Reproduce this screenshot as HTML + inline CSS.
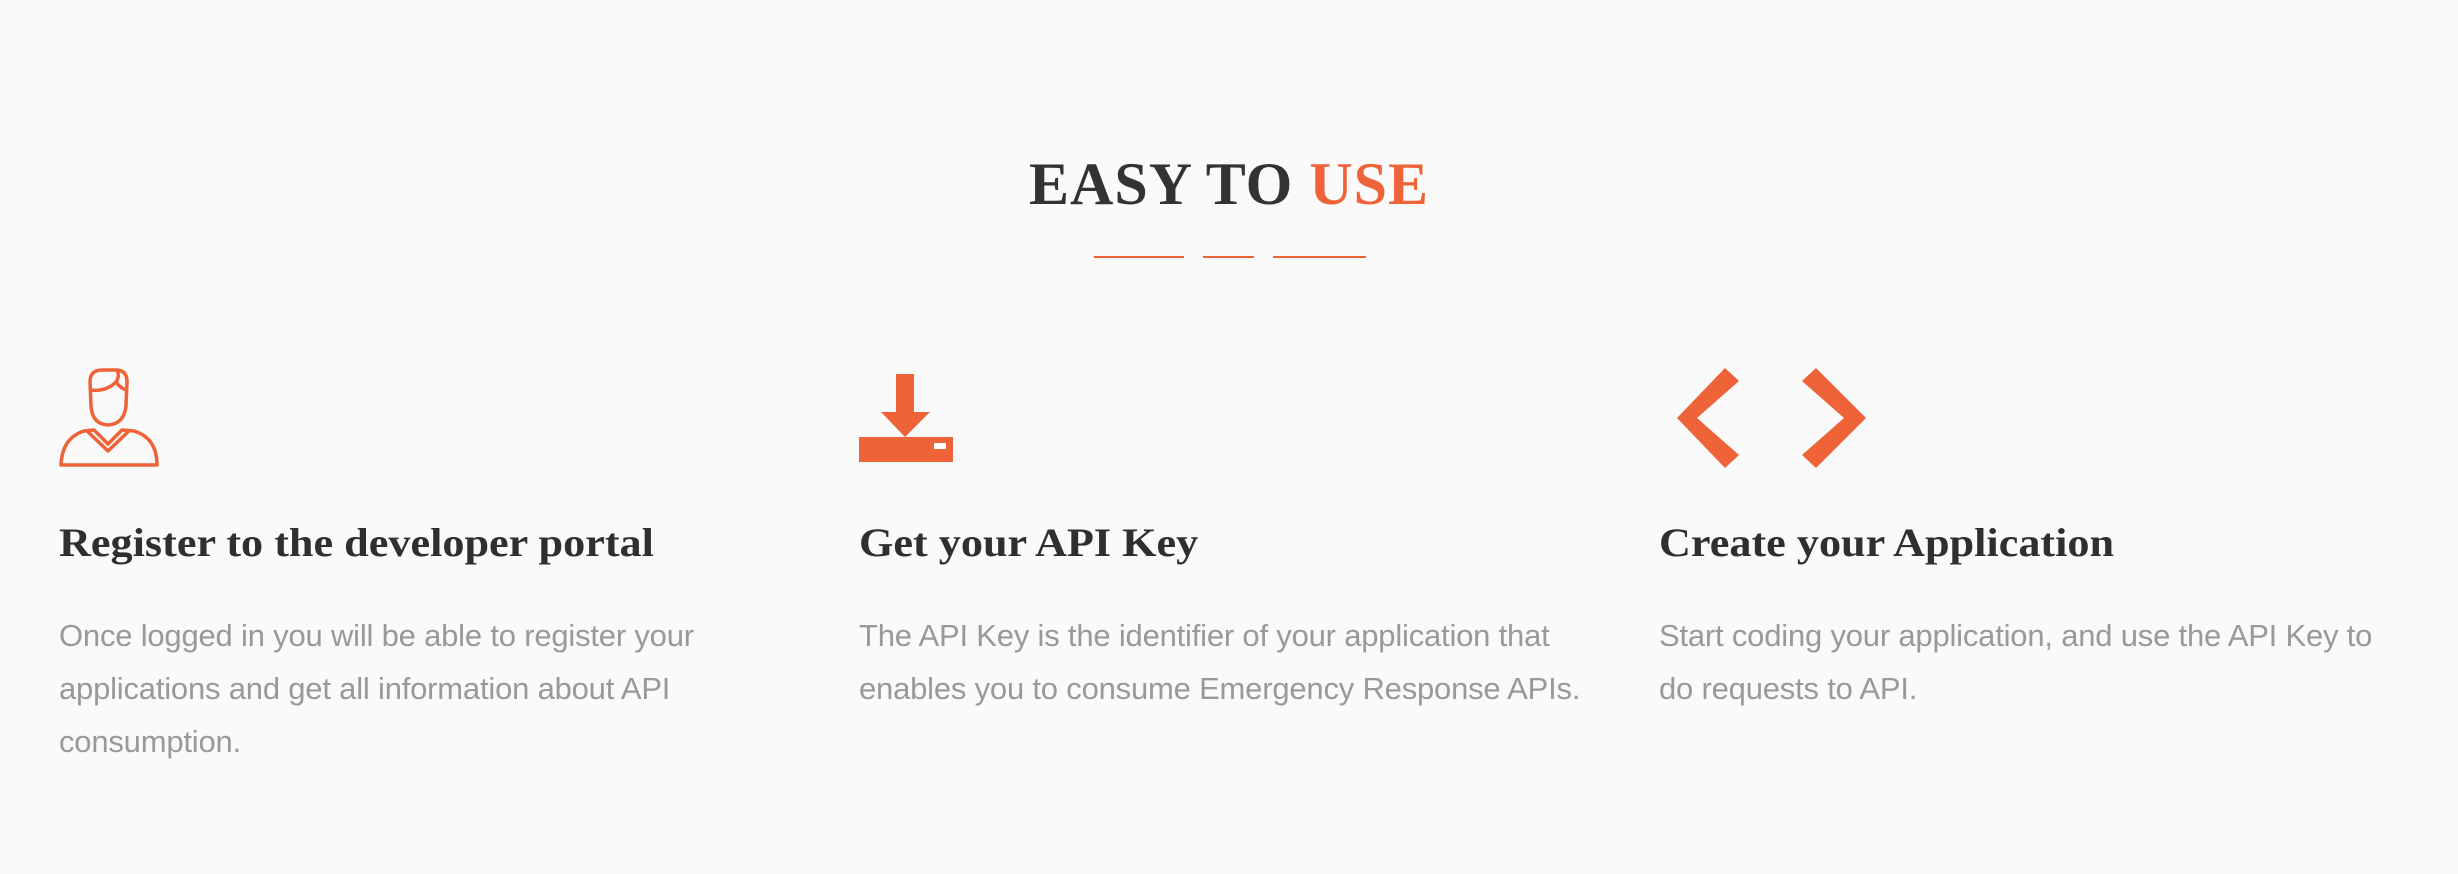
<!DOCTYPE html>
<html><head><meta charset="utf-8"><style>
html,body{margin:0;padding:0;background:#fafafa;}
body{width:2458px;height:874px;position:relative;overflow:hidden;}
.t{position:absolute;white-space:nowrap;}
.title{left:0;width:2458px;text-align:center;top:150px;font:bold 60px "Liberation Serif",serif;color:#333;letter-spacing:1px;}
.title span{color:#ee6337;}
.bar{position:absolute;top:256px;height:2px;background:#ee6337;}
.h{font:bold 40px "Liberation Serif",serif;color:#2f2f2f;top:519px;transform:scaleX(1.105);transform-origin:0 0;}
.p{font:300 31px "Liberation Sans",sans-serif;color:#999;letter-spacing:-0.2px;line-height:53px;top:609px;}
</style></head><body>
<div class="t title">EASY TO <span>USE</span></div>
<div class="bar" style="left:1094px;width:90px"></div>
<div class="bar" style="left:1203px;width:51px"></div>
<div class="bar" style="left:1273px;width:93px"></div>

<svg style="position:absolute;left:0;top:0" width="2458" height="874">
 <g fill="none" stroke="#ee6337" stroke-width="3.5" stroke-linejoin="round">
  <path d="M90 382 Q90 370 102 370 L116 370 Q127 370 127 382 L126 406 Q124 424 108 425 Q92 424 91 406 Z"/>
  <path d="M90 390 Q106 392 116 382 Q120 376 117 370"/>
  <path d="M116 382 Q121 389 127 390"/>
  <path d="M61 465 Q62 438 84 431 L94 430 L108 444 L122 430 L134 431 Q157 438 157 465 Z"/>
  <path d="M86 430 L108 451 L130 430"/>
 </g>
 <g fill="#ee6337">
  <rect x="896" y="374" width="18" height="39"/>
  <polygon points="881,412 930,412 905,437"/>
  <rect x="859" y="437" width="94" height="25"/>
  <polygon points="1725,368 1739,381 1697,418 1739,455 1725,468 1677,418"/>
  <polygon points="1816,368 1802,381 1844,418 1802,455 1816,468 1866,418"/>
 </g>
 <rect x="934" y="443" width="12" height="6" fill="#fff"/>
</svg>

<div class="t h" style="left:59px">Register to the developer portal</div>
<div class="t p" style="left:59px">Once logged in you will be able to register your<br>applications and get all information about API<br>consumption.</div>

<div class="t h" style="left:859px">Get your API Key</div>
<div class="t p" style="left:859px">The API Key is the identifier of your application that<br>enables you to consume Emergency Response APIs.</div>

<div class="t h" style="left:1659px">Create your Application</div>
<div class="t p" style="left:1659px">Start coding your application, and use the API Key to<br>do requests to API.</div>
</body></html>
